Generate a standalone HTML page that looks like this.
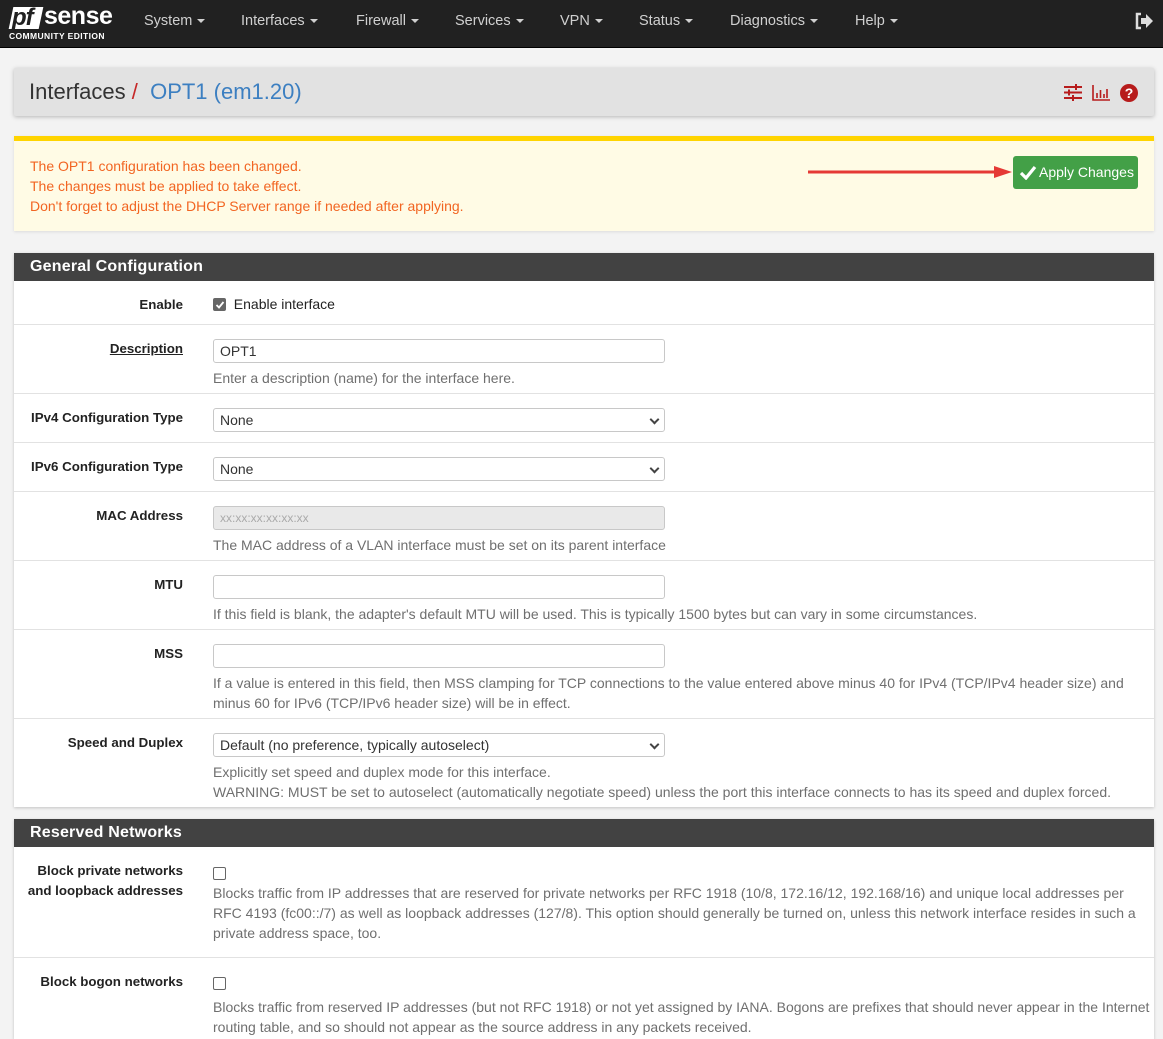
<!DOCTYPE html>
<html><head><meta charset="utf-8"><style>
*{box-sizing:border-box;margin:0;padding:0}
body{width:1163px;height:1030px;overflow:hidden;background:#f3f3f3;font-family:"Liberation Sans",Arial,sans-serif;font-size:14px;color:#222;position:relative}
.nav{position:absolute;left:0;top:0;width:1163px;height:48px;background:#212121;border-bottom:1px solid #000}
.nav .it{position:absolute;top:13px;color:#d0d0d0;font-size:14.5px}
.caret{display:inline-block;width:0;height:0;border-left:4px solid transparent;border-right:4px solid transparent;border-top:4px solid #d0d0d0;vertical-align:middle;margin-left:5px}
.bc{position:absolute;left:14px;top:68px;width:1140px;height:48px;background:#e2e2e2;box-shadow:0 1px 4px rgba(0,0,0,.25);border-radius:2px}
.alert{position:absolute;left:14px;top:136px;width:1140px;height:95px;background:#fffbe5;border-top:5px solid #ffd400;color:#f26522;font-size:14px;line-height:20px;padding:15px 0 0 16px;box-shadow:0 1px 3px rgba(0,0,0,.1)}
.btn{position:absolute;left:999px;top:15px;width:125px;height:33px;background:#43a047;border-radius:3px;color:#fff;font-size:14px;line-height:33px;padding-left:26px;white-space:nowrap}
.panel{position:absolute;left:14px;width:1140px;background:#fff;box-shadow:0 1px 3px rgba(0,0,0,.2)}
.ph{height:28px;background:#424242;color:#fff;font-weight:bold;font-size:16px;line-height:28px;padding-left:16px;letter-spacing:.2px}
.row{position:absolute;left:0;width:1140px;border-top:1px solid #e2e2e2}
.lbl{position:absolute;right:971px;top:14px;font-weight:bold;font-size:13.3px;line-height:20px;text-align:right;color:#222;white-space:nowrap}
.c{position:absolute;left:199px;top:14px;width:935px}
.inp{width:452px;height:24px;border:1px solid #c8c8c8;border-radius:3px;background:#fff;font-size:14px;line-height:22px;padding-left:6px;color:#333;position:relative}
.sel:after{content:"";position:absolute;right:6px;top:7px;width:5px;height:5px;border-right:2px solid #444;border-bottom:2px solid #444;transform:rotate(45deg)}
.help{color:#6f6f6f;line-height:20px;margin-top:5px;font-size:14px;white-space:nowrap}
.cb{display:inline-block;width:13px;height:13px;border:1px solid #666;border-radius:2px;vertical-align:-2px;background:#fff}
</style></head><body>
<div class="nav">
  <div style="position:absolute;left:9px;top:5px;width:106px;height:38px">
    <div style="position:absolute;left:2px;top:2px;width:30px;height:22px;background:#fff;transform:skewX(-12deg)"></div>
    <div style="position:absolute;left:3px;top:-1px;font:italic bold 24px 'Liberation Sans';color:#212121;letter-spacing:-1px">pf</div>
    <div style="position:absolute;left:35px;top:-3px;font:bold 25px 'Liberation Sans';color:#fff;letter-spacing:-0.5px">sense</div>
    <div style="position:absolute;left:0;top:26px;font:bold 8.5px 'Liberation Sans';color:#fff;letter-spacing:.4px;white-space:nowrap">COMMUNITY EDITION</div>
  </div>
  <div class="it" style="left:144px">System<span class="caret"></span></div>
  <div class="it" style="left:241px">Interfaces<span class="caret"></span></div>
  <div class="it" style="left:356px">Firewall<span class="caret"></span></div>
  <div class="it" style="left:455px">Services<span class="caret"></span></div>
  <div class="it" style="left:560px">VPN<span class="caret"></span></div>
  <div class="it" style="left:639px">Status<span class="caret"></span></div>
  <div class="it" style="left:730px">Diagnostics<span class="caret"></span></div>
  <div class="it" style="left:855px">Help<span class="caret"></span></div>
  <svg style="position:absolute;left:1134px;top:12px" width="20" height="18" viewBox="0 0 20 18"><path d="M7 2H3v14h4" fill="none" stroke="#ddd" stroke-width="2.5"/><path d="M7 6h5V2l7 7-7 7v-4H7z" fill="#ddd"/></svg>
</div>
<div class="bc">
  <div style="position:absolute;left:15px;top:11px;font-size:22px;color:#333">Interfaces <span style="color:#c62828">/</span>&nbsp; <span style="color:#3c7fc1">OPT1 (em1.20)</span></div>
  <svg style="position:absolute;left:1050px;top:16px" width="18" height="17" viewBox="0 0 18 17"><g stroke="#b71c1c" stroke-width="2"><path d="M0 3h18M0 8.5h18M0 14h18"/><path d="M12 0v6M5 5.5v6M9 11v6"/></g></svg>
  <svg style="position:absolute;left:1078px;top:17px" width="18" height="16" viewBox="0 0 18 16"><g stroke="#b71c1c" stroke-width="1.6" fill="none"><path d="M1 0v15h17"/><path d="M5 13V8M8.5 13V5M12 13V9M15 13V4"/></g></svg>
  <svg style="position:absolute;left:1106px;top:16px" width="18" height="18" viewBox="0 0 18 18"><circle cx="9" cy="9" r="9" fill="#b71c1c"/><text x="9" y="14" font-family="Liberation Sans" font-weight="bold" font-size="14" fill="#fff" text-anchor="middle">?</text></svg>
</div>
<div class="alert">
  The OPT1 configuration has been changed.<br>The changes must be applied to take effect.<br>Don't forget to adjust the DHCP Server range if needed after applying.
  <svg style="position:absolute;left:794px;top:24px" width="206" height="14" viewBox="0 0 206 14"><path d="M0 7h188" stroke="#e53935" stroke-width="3"/><path d="M186 1l18 6-18 6z" fill="#e53935"/></svg>
  <div class="btn"><svg style="position:absolute;left:6px;top:9px" width="18" height="15" viewBox="0 0 18 15"><path d="M2 8l5 5L16 2" fill="none" stroke="#fff" stroke-width="3.2"/></svg>Apply Changes</div>
</div>
<div class="panel" style="top:253px;height:554px">
  <div class="ph">General Configuration</div>
  <div class="row" style="top:28px;height:43px;border-top:none"><div class="lbl" style="top:14px">Enable</div><div class="c" style="top:15px"><span class="cb" style="background:#666;border-color:#666;position:relative"><svg style="position:absolute;left:1px;top:1px" width="10" height="10" viewBox="0 0 10 10"><path d="M1.5 5l2.5 2.5L8.5 2" fill="none" stroke="#fff" stroke-width="1.8"/></svg></span>&nbsp; Enable interface</div></div>
  <div class="row" style="top:71px;height:69px"><div class="lbl" style="text-decoration:underline">Description</div><div class="c"><div class="inp">OPT1</div><div class="help">Enter a description (name) for the interface here.</div></div></div>
  <div class="row" style="top:140px;height:49px"><div class="lbl">IPv4 Configuration Type</div><div class="c"><div class="inp sel">None</div></div></div>
  <div class="row" style="top:189px;height:49px"><div class="lbl">IPv6 Configuration Type</div><div class="c"><div class="inp sel">None</div></div></div>
  <div class="row" style="top:238px;height:69px"><div class="lbl">MAC Address</div><div class="c"><div class="inp" style="background:#e9e9e9;color:#aaa;font-size:12px">xx:xx:xx:xx:xx:xx</div><div class="help">The MAC address of a VLAN interface must be set on its parent interface</div></div></div>
  <div class="row" style="top:307px;height:69px"><div class="lbl">MTU</div><div class="c"><div class="inp"></div><div class="help">If this field is blank, the adapter's default MTU will be used. This is typically 1500 bytes but can vary in some circumstances.</div></div></div>
  <div class="row" style="top:376px;height:89px"><div class="lbl">MSS</div><div class="c"><div class="inp"></div><div class="help">If a value is entered in this field, then MSS clamping for TCP connections to the value entered above minus 40 for IPv4 (TCP/IPv4 header size) and<br>minus 60 for IPv6 (TCP/IPv6 header size) will be in effect.</div></div></div>
  <div class="row" style="top:465px;height:89px"><div class="lbl">Speed and Duplex</div><div class="c"><div class="inp sel">Default (no preference, typically autoselect)</div><div class="help">Explicitly set speed and duplex mode for this interface.<br>WARNING: MUST be set to autoselect (automatically negotiate speed) unless the port this interface connects to has its speed and duplex forced.</div></div></div>
</div>
<div class="panel" style="top:819px;height:220px">
  <div class="ph">Reserved Networks</div>
  <div class="row" style="top:27px;height:111px;border-top:none"><div class="lbl" style="top:15px">Block private networks<br>and loopback addresses</div><div class="c" style="top:19px"><span class="cb"></span><div class="help" style="margin-top:2px">Blocks traffic from IP addresses that are reserved for private networks per RFC 1918 (10/8, 172.16/12, 192.168/16) and unique local addresses per<br>RFC 4193 (fc00::/7) as well as loopback addresses (127/8). This option should generally be turned on, unless this network interface resides in such a<br>private address space, too.</div></div></div>
  <div class="row" style="top:138px;height:82px"><div class="lbl" style="top:14px">Block bogon networks</div><div class="c" style="top:17px"><span class="cb"></span><div class="help" style="margin-top:6px">Blocks traffic from reserved IP addresses (but not RFC 1918) or not yet assigned by IANA. Bogons are prefixes that should never appear in the Internet<br>routing table, and so should not appear as the source address in any packets received.</div></div></div>
</div>
</body></html>
